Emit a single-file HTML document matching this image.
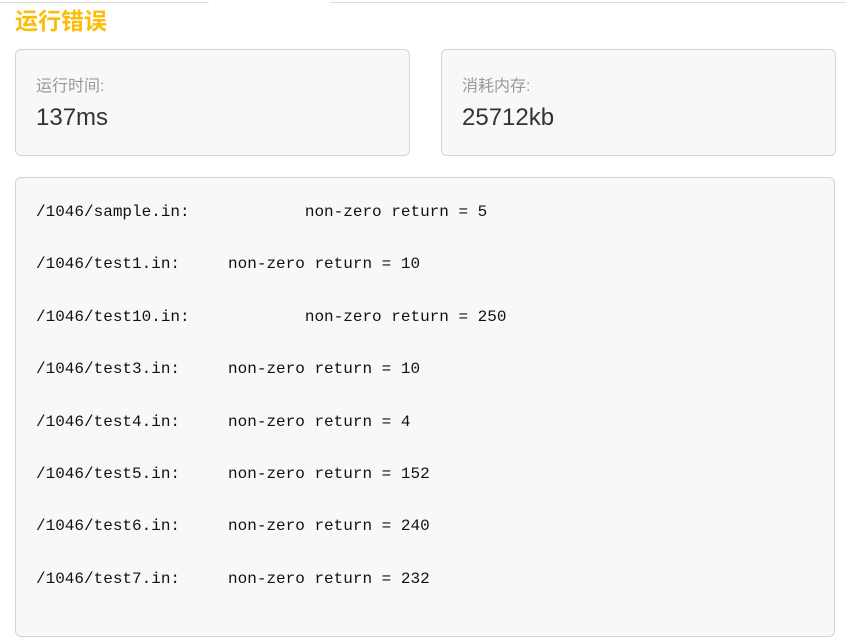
<!DOCTYPE html>
<html><head><meta charset="utf-8"><style>
body{margin:0;width:846px;height:609px;overflow:hidden;background:#fff;font-family:"Liberation Sans","Noto Sans CJK SC",sans-serif;position:relative}
.tl{position:absolute;top:0;height:2px;border-bottom:1px solid #ddd}
h1{position:absolute;left:15px;top:6px;margin:0;font-size:23px;font-weight:bold;color:#fbbd08;line-height:30px}
.card{position:absolute;top:49px;width:395px;height:107px;background:#f7f8fa;border:1px solid #d4d4d5;border-radius:6px;box-sizing:border-box}
.card .l{position:absolute;left:20px;top:22px;font-size:16px;color:#999}
.card .v{position:absolute;left:20px;top:54px;font-size:24px;color:#333}
.code{position:absolute;left:15px;top:177px;width:820px;height:460px;background:#f7f8fa;border:1px solid #d4d4d5;border-radius:6px;box-sizing:border-box}
pre{margin:0;position:absolute;left:20px;top:8px;font-family:"Liberation Mono",monospace;font-size:16px;line-height:52.4px;color:#111}
</style></head><body>
<div class="tl" style="left:0;width:209px"></div>
<div class="tl" style="left:330px;width:516px"></div>
<h1>运行错误</h1>
<div class="card" style="left:15px"><div class="l">运行时间:</div><div class="v">137ms</div></div>
<div class="card" style="left:441px"><div class="l">消耗内存:</div><div class="v">25712kb</div></div>
<div class="code"><pre>/1046/sample.in:            non-zero return = 5
/1046/test1.in:     non-zero return = 10
/1046/test10.in:            non-zero return = 250
/1046/test3.in:     non-zero return = 10
/1046/test4.in:     non-zero return = 4
/1046/test5.in:     non-zero return = 152
/1046/test6.in:     non-zero return = 240
/1046/test7.in:     non-zero return = 232</pre></div>
</body></html>
